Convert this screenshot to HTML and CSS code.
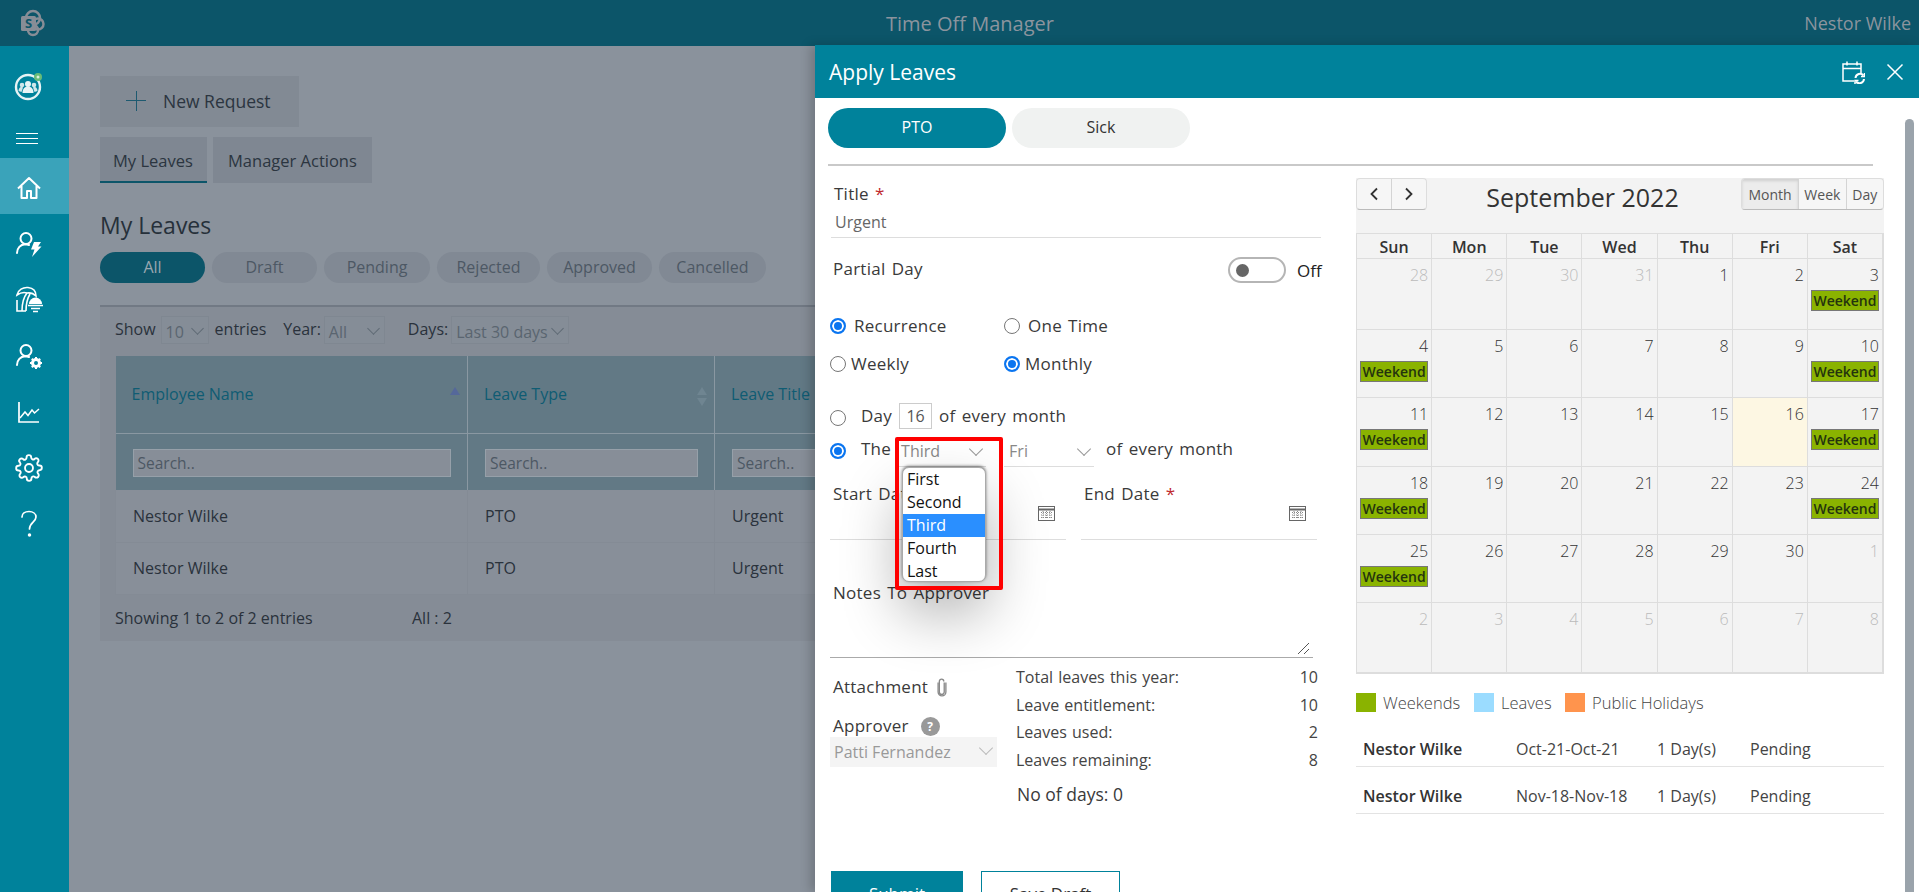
FILE: index.html
```html
<!DOCTYPE html>
<html lang="en">
<head>
    <meta charset="UTF-8">
    <meta name="viewport" content="width=device-width, initial-scale=1.0">
    <title>Time Off Manager</title>
    <link rel="stylesheet" href="styles.css">
</head>
<body>
    <header class="topbar">
        <svg class="sp-logo" width="28" height="28" viewBox="0 0 28 28">
            <circle cx="15" cy="9" r="7" fill="none" stroke="#878d96" stroke-width="2.5"/>
            <circle cx="20" cy="15" r="5.5" fill="none" stroke="#878d96" stroke-width="2.5"/>
            <circle cx="15" cy="21" r="5" fill="none" stroke="#878d96" stroke-width="2.5"/>
            <rect x="3" y="7" width="15" height="15" rx="1.5" fill="#878d96"/>
            <text x="10.5" y="19" text-anchor="middle" class="sp-letter">S</text>
        </svg>
        <div class="app-title">Time Off Manager</div>
        <div class="user-name">Nestor Wilke</div>
    </header>

    <div class="shell">
        <nav class="sidebar">
            <div class="nav-avatar">
                <svg width="32" height="32" viewBox="0 0 32 32">
                    <circle cx="15" cy="17" r="12" fill="none" stroke="#fff" stroke-width="2.4" opacity=".9"/>
                    <circle cx="15" cy="14" r="3" fill="#e8f4f6"/>
                    <path d="M9.5 23c0-4 2-6.500 5.500-6.500s5.500 2.500 5.500 6.500z" fill="#e8f4f6"/>
                    <circle cx="9" cy="15" r="2.300" fill="#cfe6ea"/>
                    <circle cx="21" cy="15" r="2.300" fill="#cfe6ea"/>
                    <path d="M5.500 21c0-2.500 1.500-4.300 3.500-4.300l1 .8-1.500 4.500zM24.500 21c0-2.500-1.500-4.300-3.500-4.300l-1 .8 1.500 4.500z" fill="#cfe6ea"/>
                    <circle cx="25" cy="7" r="4" fill="#68bb78"/>
                    <circle cx="25" cy="7" r="1.500" fill="#d9efd9"/>
                </svg>
            </div>
            <div class="nav-burger"><span></span><span></span><span></span></div>
            <a class="nav-item active">
                <svg width="26" height="26" viewBox="0 0 26 26" fill="none" stroke="#fff" stroke-width="2" stroke-linejoin="round">
                    <path d="M2 13.500 13 3l11 10.500M5.500 11v12h5.500v-7h4v7h5.500V11"/>
                </svg>
            </a>
            <a class="nav-item">
                <svg width="28" height="28" viewBox="0 0 28 28" fill="none" stroke="#fff" stroke-width="2">
                    <circle cx="11" cy="8.500" r="5.500"/>
                    <path d="M2 23c0-5 3.500-8.500 8-8.800 1.500 0 3 .3 4 .8" stroke-linecap="round"/>
                    <path d="M19 12h7l-3 4.500h3.500L17 27l2.500-7.500H16z" fill="#fff" stroke="none"/>
                </svg>
            </a>
            <a class="nav-item">
                <svg width="28" height="28" viewBox="0 0 28 28" fill="none" stroke="#fff" stroke-width="1.600">
                    <path d="M2 9C3 4 8 1 13 1.500 18 2 21 5 21 10 18 7 15 6.500 12 7 9 6 5 7 2 9z"/>
                    <path d="M12 7C8 12 7 18 7 25M15 8C12 13 11 19 11 25M2 14v11h9"/>
                    <path d="M14 18a6.500 6.500 0 0 1 13 0z" fill="#fff" stroke="none"/>
                    <path d="M13 19.500h15M16 22.500h9M18 25.500h5"/>
                </svg>
            </a>
            <a class="nav-item">
                <svg width="28" height="28" viewBox="0 0 28 28" fill="none" stroke="#fff" stroke-width="2">
                    <circle cx="11" cy="8.500" r="5.500"/>
                    <path d="M2 23c0-5 3.500-8.500 8-8.800 1.500 0 3 .3 4 .8" stroke-linecap="round"/>
                    <circle cx="21" cy="21" r="3.500" stroke-width="3"/>
                    <path d="M21 15v2.500M21 24.500V27M15 21h2.500M24.500 21H27M16.800 16.800l1.800 1.800M23.400 23.400l1.800 1.800M25.200 16.800l-1.800 1.800M18.600 23.400l-1.800 1.800" stroke-width="2"/>
                </svg>
            </a>
            <a class="nav-item">
                <svg width="24" height="24" viewBox="0 0 24 24" fill="none" stroke="#fff" stroke-width="1.700">
                    <path d="M2 2v20h20"/>
                    <path d="M3 18l5-6 3 3.500L15 10l2.500 3L22 9" stroke-width="1.500"/>
                </svg>
            </a>
            <a class="nav-item">
                <svg width="28" height="28" viewBox="0 0 24 24" fill="none" stroke="#fff" stroke-width="1.600" stroke-linejoin="round">
                    <circle cx="12" cy="12" r="3.400"/>
                    <path d="M19.400 15a1.650 1.650 0 0 0 .33 1.820l.06.06a2 2 0 1 1-2.830 2.830l-.06-.06a1.650 1.650 0 0 0-2.800 1.170V21a2 2 0 1 1-4 0v-.09a1.650 1.650 0 0 0-2.800-1.170l-.06.06a2 2 0 1 1-2.830-2.830l.06-.06a1.650 1.650 0 0 0-1.170-2.800H3a2 2 0 1 1 0-4h.09a1.650 1.650 0 0 0 1.170-2.800l-.06-.06a2 2 0 1 1 2.830-2.830l.06.06a1.650 1.650 0 0 0 2.800-1.170V3a2 2 0 1 1 4 0v.09a1.650 1.650 0 0 0 2.800 1.170l.06-.06a2 2 0 1 1 2.830 2.830l-.06.06a1.650 1.650 0 0 0 1.170 2.800H21a2 2 0 1 1 0 4h-.09a1.650 1.650 0 0 0-1.510 1z"/>
                </svg>
            </a>
            <a class="nav-item">
                <svg width="18" height="28" viewBox="0 0 18 28" fill="none" stroke="#fff" stroke-width="1.700">
                    <path d="M2 7c0-3.500 3-5.500 7-5.500s7 2.300 7 5.500c0 5-6.500 5.500-6.500 12" stroke-linecap="round"/>
                    <circle cx="9.500" cy="25" r=".9" fill="#fff"/>
                </svg>
            </a>
        </nav>

        <main class="page">
            <button class="new-request"><span class="plus"></span>New Request</button>
            <div class="tabs">
                <div class="tab selected">My Leaves</div>
                <div class="tab">Manager Actions</div>
            </div>
            <h1 class="page-title">My Leaves</h1>
            <div class="status-pills">
                <span class="status on">All</span>
                <span class="status">Draft</span>
                <span class="status w-pen">Pending</span>
                <span class="status w-rej">Rejected</span>
                <span class="status w-app">Approved</span>
                <span class="status w-can">Cancelled</span>
            </div>
            <section class="card">
                <div class="filters">
                    <span>Show</span><span class="dim-sel w-10">10</span><span>entries</span>
                    <span class="gap-l">Year:</span><span class="dim-sel w-all">All</span>
                    <span class="gap-l">Days:</span><span class="dim-sel w-days">Last 30 days</span>
                </div>
                <table class="leaves">
                    <thead>
                        <tr class="head-row">
                            <th class="c1">Employee Name<i class="sort-up"></i></th>
                            <th class="c2">Leave Type<i class="sort-both"></i></th>
                            <th>Leave Title</th>
                        </tr>
                        <tr class="search-row">
                            <th><div class="search">Search..</div></th>
                            <th><div class="search">Search..</div></th>
                            <th><div class="search">Search..</div></th>
                        </tr>
                    </thead>
                    <tbody>
                        <tr><td>Nestor Wilke</td><td>PTO</td><td>Urgent</td></tr>
                        <tr><td>Nestor Wilke</td><td>PTO</td><td>Urgent</td></tr>
                    </tbody>
                </table>
                <div class="table-foot"><span>Showing 1 to 2 of 2 entries</span><span>All : 2</span></div>
            </section>
        </main>
    </div>

    <aside class="panel">
        <div class="panel-head">
            <span class="panel-title">Apply Leaves</span>
            <svg class="cal-sync" width="24" height="24" viewBox="0 0 24 24" fill="none" stroke="#fff" stroke-width="1.500">
                <path d="M13 21H2V4h18v9M2 8.500h18M6 1.500v4M16 1.500v4"/>
                <path d="M14.500 18a4.500 4.500 0 0 1 8-2.500M23 19a4.500 4.500 0 0 1-8 2.500" stroke-width="2"/>
                <path d="M23.500 13v3.500H20M14 24v-3.500h3.500" stroke-width="1.500"/>
            </svg>
            <svg class="close-x" width="18" height="18" viewBox="0 0 18 18" stroke="#fff" stroke-width="1.500"><path d="M1.500 1.500l15 15M16.500 1.500l-15 15"/></svg>
        </div>
        <div class="panel-body">
            <div class="type-pills">
                <span class="type on">PTO</span>
                <span class="type">Sick</span>
            </div>
            <div class="rule"></div>
            <div class="columns">
                <form class="form">
                    <label class="lbl title-lbl">Title <b class="req">*</b></label>
                    <div class="text-field">Urgent</div>

                    <div class="partial">
                        <span class="lbl">Partial Day</span>
                        <span class="toggle"><i></i></span>
                        <span class="toggle-txt">Off</span>
                    </div>

                    <div class="radio-row first">
                        <span class="col-a"><i class="radio on"></i><span class="lbl">Recurrence</span></span>
                        <span class="col-b"><i class="radio"></i><span class="lbl">One Time</span></span>
                    </div>
                    <div class="radio-row second">
                        <span class="col-a tight"><i class="radio"></i><span class="lbl">Weekly</span></span>
                        <span class="col-b tight"><i class="radio on"></i><span class="lbl">Monthly</span></span>
                    </div>

                    <div class="day-row">
                        <i class="radio low"></i>
                        <span class="lbl">Day</span>
                        <span class="day-input">16</span>
                        <span class="lbl">of every month</span>
                    </div>
                    <div class="the-row">
                        <i class="radio low on"></i>
                        <span class="lbl">The</span>
                        <span class="line-sel w-third">Third</span>
                        <span class="line-sel w-fri">Fri</span>
                        <span class="lbl">of every month</span>
                        <div class="dropdown">
                            <div>First</div>
                            <div>Second</div>
                            <div class="picked">Third</div>
                            <div>Fourth</div>
                            <div>Last</div>
                        </div>
                        <div class="red-box"></div>
                    </div>

                    <div class="dates">
                        <div class="date-field">
                            <label class="lbl">Start Date <b class="req">*</b></label>
                            <div class="date-input">
                                <svg width="18" height="16" viewBox="0 0 18 16" fill="none" stroke="#666"><rect x=".5" y="1.500" width="16" height="14"/><path d="M.5 4.500h16" stroke-width="2"/><path d="M3 7.500h11M3 10h11M3 12.500h11M5 6v8M8.500 6v8M12 6v8" stroke-dasharray="1 1" stroke="#888"/></svg>
                            </div>
                        </div>
                        <div class="date-field">
                            <label class="lbl">End Date <b class="req">*</b></label>
                            <div class="date-input">
                                <svg width="18" height="16" viewBox="0 0 18 16" fill="none" stroke="#666"><rect x=".5" y="1.500" width="16" height="14"/><path d="M.5 4.500h16" stroke-width="2"/><path d="M3 7.500h11M3 10h11M3 12.500h11M5 6v8M8.500 6v8M12 6v8" stroke-dasharray="1 1" stroke="#888"/></svg>
                            </div>
                        </div>
                    </div>

                    <label class="lbl notes-lbl">Notes To Approver</label>
                    <div class="notes">
                        <svg width="13" height="13" viewBox="0 0 13 13" stroke="#555"><path d="M1 12 12 1M7 12l5-5"/></svg>
                    </div>

                    <div class="bottom">
                        <div class="bottom-left">
                            <div class="attach">
                                <span class="lbl">Attachment</span>
                                <svg width="10" height="19" viewBox="0 0 9 17" fill="none" stroke="#888" stroke-width="1.200"><path d="M6.500 4v8.500a2.200 2.200 0 0 1-4.400 0V3a2 2 0 0 1 4 0"/><path d="M8 4v8.500a3.500 3.500 0 0 1-7 0V4"/></svg>
                            </div>
                            <div class="approver">
                                <span class="lbl">Approver</span>
                                <span class="help">?</span>
                            </div>
                            <div class="approver-sel">Patti Fernandez</div>
                        </div>
                        <div class="bottom-right">
                            <div class="stat"><span>Total leaves this year:</span><span>10</span></div>
                            <div class="stat"><span>Leave entitlement:</span><span>10</span></div>
                            <div class="stat"><span>Leaves used:</span><span>2</span></div>
                            <div class="stat"><span>Leaves remaining:</span><span>8</span></div>
                            <div class="no-days">No of days: 0</div>
                        </div>
                    </div>

                    <div class="actions">
                        <button type="button" class="submit">Submit</button>
                        <button type="button" class="draft">Save Draft</button>
                    </div>
                </form>

                <div class="side">
                    <div class="cal-toolbar">
                        <div class="btn-group arrows">
                            <span class="cal-btn"><svg width="10" height="14" viewBox="0 0 10 14" fill="none" stroke="#333" stroke-width="1.800"><path d="M8 1.500 2.500 7 8 12.500"/></svg></span>
                            <span class="cal-btn"><svg width="10" height="14" viewBox="0 0 10 14" fill="none" stroke="#333" stroke-width="1.800"><path d="M2 1.500 7.500 7 2 12.500"/></svg></span>
                        </div>
                        <div class="cal-title">September 2022</div>
                        <div class="btn-group views">
                            <span class="cal-btn v-month pressed">Month</span>
                            <span class="cal-btn v-week">Week</span>
                            <span class="cal-btn v-day">Day</span>
                        </div>
                    </div>
                    <div class="cal-grid">
                        <div class="dow">Sun</div><div class="dow">Mon</div><div class="dow">Tue</div><div class="dow">Wed</div><div class="dow">Thu</div><div class="dow">Fri</div><div class="dow">Sat</div>

                        <div class="day other">28</div><div class="day other">29</div><div class="day other">30</div><div class="day other">31</div><div class="day">1</div><div class="day">2</div><div class="day">3<span class="wk">Weekend</span></div>
                        <div class="day">4<span class="wk">Weekend</span></div><div class="day">5</div><div class="day">6</div><div class="day">7</div><div class="day">8</div><div class="day">9</div><div class="day">10<span class="wk">Weekend</span></div>
                        <div class="day">11<span class="wk">Weekend</span></div><div class="day">12</div><div class="day">13</div><div class="day">14</div><div class="day">15</div><div class="day today">16</div><div class="day">17<span class="wk">Weekend</span></div>
                        <div class="day">18<span class="wk">Weekend</span></div><div class="day">19</div><div class="day">20</div><div class="day">21</div><div class="day">22</div><div class="day">23</div><div class="day">24<span class="wk">Weekend</span></div>
                        <div class="day">25<span class="wk">Weekend</span></div><div class="day">26</div><div class="day">27</div><div class="day">28</div><div class="day">29</div><div class="day">30</div><div class="day other">1</div>
                        <div class="day other">2</div><div class="day other">3</div><div class="day other">4</div><div class="day other">5</div><div class="day other">6</div><div class="day other">7</div><div class="day other">8</div>
                    </div>
                    <div class="legend">
                        <i class="sw green"></i><span class="leg-a">Weekends</span>
                        <i class="sw blue"></i><span class="leg-b">Leaves</span>
                        <i class="sw orange"></i><span>Public Holidays</span>
                    </div>
                    <div class="req-row first-req"><b>Nestor Wilke</b><span class="r-date">Oct-21-Oct-21</span><span class="r-days">1 Day(s)</span><span>Pending</span></div>
                    <div class="req-row"><b>Nestor Wilke</b><span class="r-date">Nov-18-Nov-18</span><span class="r-days">1 Day(s)</span><span>Pending</span></div>
                </div>
            </div>
        </div>
        <div class="scroll-thumb"></div>
    </aside>
</body>
</html>
```

FILE: styles.css
```css
* {
    box-sizing: border-box;
}
html, body {
    height: 100%;
}
body {
    margin: 0;
    font-family: "Open Sans", "Noto Sans", sans-serif;
    font-size: 15px;
    color: #333;
    overflow: hidden;
    background: #8a929c;
}
button {
    font-family: inherit;
}

/* top bar */
.topbar {
    height: 46px;
    background: #0c5569;
    position: relative;
    display: flex;
    align-items: center;
    padding: 0 8px 0 18px;
}
.sp-letter {
    font-family: "Open Sans", sans-serif;
    font-size: 13px;
    font-weight: 700;
    fill: #0c5569;
}
.app-title {
    margin-left: 840px;
    font-size: 20px;
    color: #8b949e;
}
.user-name {
    margin-left: auto;
    font-size: 18px;
    color: #8b949e;
}

/* left nav */
.shell {
    display: flex;
    height: calc(100% - 46px);
}
.sidebar {
    width: 69px;
    flex: none;
    background: #00829b;
    display: flex;
    flex-direction: column;
}
.nav-avatar {
    height: 70px;
    display: flex;
    align-items: center;
    padding: 10px 0 0 13px;
}
.nav-burger {
    height: 42px;
    padding: 17px 0 0 16px;
}
.nav-burger span {
    display: block;
    width: 22px;
    height: 1px;
    background: #fff;
    margin-bottom: 4px;
}
.nav-item {
    height: 56px;
    display: flex;
    align-items: center;
    justify-content: center;
    padding: 3px 12px 0 0;
}
.nav-item.active {
    background: #3aa3ba;
}

/* page behind the panel */
.page {
    flex: 1;
    min-width: 0;
    padding: 30px 0 0 31px;
    overflow: hidden;
}
.new-request {
    width: 199px;
    height: 51px;
    border: none;
    background: #828a94;
    color: #2b3540;
    font-size: 17.500px;
    font-weight: 500;
    display: flex;
    align-items: center;
    padding: 0 0 2px 26px;
}
.plus {
    width: 20px;
    height: 20px;
    margin-right: 17px;
    background:
        linear-gradient(#1e5a70, #1e5a70) center / 100% 1px no-repeat,
        linear-gradient(#1e5a70, #1e5a70) center / 1px 100% no-repeat;
}
.tabs {
    display: flex;
    gap: 6px;
    margin-top: 10px;
}
.tab {
    height: 46px;
    line-height: 48px;
    padding: 0 15px;
    background: #7f8792;
    color: #2b3540;
    font-size: 16.500px;
    font-weight: 500;
}
.tab.selected {
    width: 107px;
    padding: 0 13px;
    border-bottom: 2px solid #0c5569;
}
.page-title {
    margin: 26px 0 0;
    height: 33px;
    line-height: 33px;
    font-size: 23px;
    font-weight: 500;
    color: #26303a;
}
.status-pills {
    display: flex;
    gap: 7px;
    margin-top: 10px;
}
.status {
    width: 105px;
    height: 31px;
    line-height: 30px;
    border-radius: 16px;
    background: #818994;
    color: #4d5864;
    text-align: center;
    font-size: 16px;
}
.status.on {
    background: #0c5569;
    color: #9aa7b0;
}
.status.w-pen { width: 106px; }
.status.w-rej { width: 103px; }
.status.w-app { width: 105px; }
.status.w-can { width: 107px; }
.card {
    margin-top: 22px;
    height: 336px;
    width: 800px;
    background: #858c96;
    border-top: 2px solid #717984;
    padding: 0 0 0 15px;
    color: #2a323c;
    font-size: 16px;
}
.filters {
    height: 49px;
    display: flex;
    align-items: center;
    padding-bottom: 5px;
}
.gap-l {
    margin-left: 17px;
    margin-right: 3px;
}
.dim-sel {
    position: relative;
    height: 28px;
    line-height: 30px;
    color: #5a6570;
    padding-left: 4px;
    font-size: 16px;
    background: #858d97;
    border: 1px solid #7f8791;
    margin: 2px 6px 0 5px;
}
.dim-sel::after {
    content: "";
    position: absolute;
    right: 6px;
    top: 7px;
    width: 8px;
    height: 8px;
    border-right: 1px solid #5f6a75;
    border-bottom: 1px solid #5f6a75;
    transform: rotate(45deg);
}
.w-10 { width: 48px; }
.w-all { width: 61px; margin-left: 0; }
.w-days { width: 118px; margin-left: 0; }
.leaves {
    border-collapse: collapse;
    table-layout: fixed;
    width: 900px;
}
.leaves th {
    font-weight: 400;
    text-align: left;
    background: #627985;
    border-left: 1px solid #8a98a2;
    position: relative;
}
.leaves th:first-child {
    border-left: none;
}
.head-row th {
    height: 77px;
    padding-left: 16px;
    color: #0f5c73;
    font-size: 16px;
    border-bottom: 1px solid #8a98a2;
}
.c1 { width: 352px; }
.c2 { width: 247px; }
.search-row th {
    height: 57px;
    padding: 0 16px 0 17px;
}
.search {
    height: 28px;
    background: #878e98;
    border: 1px solid #96a0a9;
    color: #4d5864;
    font-size: 15.500px;
    line-height: 27px;
    padding-left: 4px;
    margin-top: 2px;
}
.sort-up, .sort-both {
    position: absolute;
    right: 7px;
    top: 31px;
    border-left: 5px solid transparent;
    border-right: 5px solid transparent;
    border-bottom: 8px solid #55689a;
}
.sort-both {
    border-bottom-color: #6f8591;
}
.sort-both::after {
    content: "";
    position: absolute;
    left: -5px;
    top: 11px;
    border-left: 5px solid transparent;
    border-right: 5px solid transparent;
    border-top: 8px solid #6f8591;
}
.leaves td {
    height: 52px;
    background: #888f99;
    padding-left: 17px;
    border-left: 1px solid #848b95;
    border-bottom: 1px solid #848b95;
}
.table-foot {
    display: flex;
    height: 47px;
    align-items: center;
}
.table-foot span:first-child {
    width: 297px;
}

/* slide-in panel */
.panel {
    position: absolute;
    top: 45px;
    right: 0;
    bottom: 0;
    width: 1104px;
    background: #fff;
    box-shadow: -5px 0 10px rgba(0, 0, 0, .18);
    overflow: hidden;
}
.panel-head {
    height: 53px;
    background: #00829b;
    display: flex;
    align-items: center;
    padding: 0 15px 0 14px;
}
.panel-title {
    color: #fff;
    font-size: 21px;
    flex: 1;
}
.cal-sync {
    margin-right: 21px;
}
.panel-body {
    padding: 10px 0 0 13px;
}
.type-pills {
    display: flex;
    gap: 6px;
}
.type {
    width: 178px;
    height: 40px;
    line-height: 39px;
    text-align: center;
    border-radius: 20px;
    background: #f0f2f1;
    font-size: 16px;
}
.type.on {
    background: #00829b;
    color: #fff;
}
.rule {
    height: 2px;
    width: 1045px;
    margin-top: 16px;
    background: #c9c9c9;
}
.columns {
    display: grid;
    grid-template-columns: 498px 528px;
    column-gap: 30px;
    align-items: start;
}

/* form column */
.form {
    padding-left: 2px;
    position: relative;
}
.lbl {
    font-size: 17px;
    letter-spacing: .25px;
    word-spacing: 1.500px;
    font-weight: 500;
    color: #3a3a3a;
    line-height: 22px;
}
.req {
    color: #c0282d;
    font-weight: 400;
}
.title-lbl {
    display: block;
    margin: 17px 0 0 4px;
}
.text-field {
    height: 33px;
    width: 490px;
    margin-left: 1px;
    padding: 7px 0 0 4px;
    line-height: 20px;
    color: #666;
    font-size: 16px;
    border-bottom: 1px solid #ddd;
}
.partial {
    display: flex;
    align-items: center;
    height: 26px;
    margin-top: 19px;
    padding-left: 3px;
}
.partial .lbl {
    flex: 1;
    margin-bottom: 2px;
}
.toggle {
    width: 58px;
    height: 26px;
    border: 2px solid #b5b5b5;
    border-radius: 13px;
    padding: 5px 0 0 6px;
    margin-right: 11px;
}
.toggle i {
    display: block;
    width: 13px;
    height: 13px;
    border-radius: 50%;
    background: #666;
}
.toggle-txt {
    width: 29px;
    font-size: 17px;
    color: #222;
}
.radio-row {
    display: flex;
    height: 24px;
    align-items: center;
}
.radio-row.first { margin-top: 31px; }
.radio-row.second { margin-top: 14px; }
.col-a, .col-b {
    display: flex;
    align-items: center;
    gap: 8px;
}
.col-a { width: 174px; }
.col-a.tight, .col-b.tight { gap: 5px; }
.radio {
    width: 16px;
    height: 16px;
    flex: none;
    border-radius: 50%;
    border: 1px solid #767676;
    background: #fff;
}
.radio.on {
    border: 2px solid #0a75f0;
    box-shadow: inset 0 0 0 2px #fff;
    background: #0a75f0;
}
.radio.low {
    margin-top: 3px;
}
.day-row {
    display: flex;
    align-items: center;
    height: 26px;
    margin-top: 27px;
}
.day-row .lbl:first-of-type,
.the-row .lbl:first-of-type {
    margin-left: 15px;
}
.day-input {
    width: 33px;
    height: 26px;
    line-height: 24px;
    margin: 0 7px 0 7px;
    border: 1px solid #ccc;
    text-align: center;
    font-size: 16px;
    color: #555;
}
.the-row {
    display: flex;
    height: 30px;
    margin-top: 8px;
    position: relative;
    align-items: flex-start;
}
.the-row .lbl {
    line-height: 24px;
}
.the-row .radio {
    margin-top: 6px;
}
.line-sel {
    position: relative;
    height: 30px;
    line-height: 28px;
    border-bottom: 1px solid #ddd;
    color: #888;
    font-size: 16px;
    padding-left: 5px;
}
.line-sel::after {
    content: "";
    position: absolute;
    right: 5px;
    top: 7px;
    width: 9px;
    height: 9px;
    border-right: 1px solid #999;
    border-bottom: 1px solid #999;
    transform: rotate(45deg);
}
.w-third {
    width: 90px;
    margin-left: 5px;
}
.w-fri {
    width: 90px;
    margin: 0 12px 0 18px;
}
.dropdown {
    position: absolute;
    left: 72px;
    top: 30px;
    width: 84px;
    height: 115px;
    z-index: 2;
    background: #fff;
    border: 1px solid #aaa;
    border-radius: 7px;
    box-shadow: 0 -1px 3px rgba(0, 0, 0, .5), 0 30px 60px rgba(0, 0, 0, .32);
    font-size: 16px;
    line-height: 23px;
    color: #111;
    overflow: hidden;
}
.dropdown div {
    height: 23px;
    padding-left: 4px;
}
.dropdown .picked {
    background: #2a8fff;
    color: #fff;
}
.red-box {
    position: absolute;
    left: 65px;
    top: 0;
    width: 108px;
    height: 153px;
    z-index: 3;
    border: 4px solid #f00;
    border-radius: 2px;
    pointer-events: none;
}
.dates {
    display: flex;
    gap: 15px;
    margin-top: 16px;
}
.date-field {
    width: 236px;
}
.date-field .lbl {
    display: block;
    padding-left: 3px;
}
.date-input {
    height: 35px;
    border-bottom: 1px solid #ddd;
    display: flex;
    justify-content: flex-end;
    padding: 0 10px 0 0;
}
.notes-lbl {
    display: block;
    margin: 42px 0 0 3px;
}
.notes {
    width: 483px;
    height: 54px;
    border-bottom: 1px solid #aaa;
    display: flex;
    align-items: flex-end;
    justify-content: flex-end;
    padding: 0 3px 2px 0;
}
.bottom {
    display: flex;
    gap: 19px;
    height: 213px;
}
.bottom-left {
    width: 167px;
}
.attach {
    display: flex;
    align-items: center;
    gap: 9px;
    margin-top: 18px;
    padding-left: 3px;
}
.approver {
    display: flex;
    align-items: center;
    gap: 12px;
    margin-top: 17px;
    padding-left: 3px;
}
.help {
    width: 19px;
    height: 19px;
    line-height: 19px;
    border-radius: 50%;
    background: #999;
    color: #fff;
    font-size: 12px;
    font-weight: 700;
    text-align: center;
}
.approver-sel {
    position: relative;
    height: 30px;
    line-height: 30px;
    padding-left: 4px;
    background: #f4f4f4;
    color: #999;
    font-size: 16px;
}
.approver-sel::after {
    content: "";
    position: absolute;
    right: 6px;
    top: 6px;
    width: 9px;
    height: 9px;
    border-right: 1px solid #bbb;
    border-bottom: 1px solid #bbb;
    transform: rotate(45deg);
}
.bottom-right {
    width: 302px;
    padding-top: 6px;
}
.stat {
    display: flex;
    justify-content: space-between;
    height: 27.500px;
    line-height: 27px;
    font-size: 16px;
    word-spacing: 1px;
    font-weight: 500;
    color: #444;
}
.stat span:last-child {
    font-weight: 400;
}
.no-days {
    margin-top: 8px;
    padding-left: 1px;
    font-size: 17.500px;
    font-weight: 500;
    color: #3a3a3a;
}
.actions {
    display: flex;
    gap: 18px;
    padding-left: 1px;
}
.actions button {
    height: 44px;
    font-size: 17px;
    display: block;
}
.submit {
    width: 132px;
    border: none;
    background: #00829b;
    color: #fff;
}
.draft {
    width: 139px;
    border: 1px solid #00829b;
    background: #fff;
    color: #333;
}

/* calendar column */
.side {
    padding-top: 12px;
}
.cal-toolbar {
    height: 55px;
    background: #f3f3f3;
    display: flex;
    align-items: flex-start;
}
.btn-group {
    display: flex;
    height: 32px;
    border: 1px solid #ddd;
    border-bottom-color: #bbb;
    border-radius: 4px;
    background: #f6f6f6;
    overflow: hidden;
}
.arrows {
    width: 71px;
}
.cal-btn {
    display: flex;
    align-items: center;
    justify-content: center;
    font-size: 14px;
    color: #555;
    border-left: 1px solid #d4d4d4;
}
.arrows .cal-btn {
    flex: 1;
}
.cal-btn:first-child {
    border-left: none;
}
.pressed {
    background: #ececec;
    box-shadow: inset 0 2px 3px rgba(0, 0, 0, .12);
}
.v-month { width: 57px; }
.v-week { width: 48px; }
.v-day { width: 38px; }
.views {
    width: 143px;
}
.cal-title {
    flex: 1;
    text-align: center;
    font-size: 25px;
    line-height: 38px;
    color: #333;
    padding-right: 3px;
}
.cal-grid {
    display: grid;
    grid-template-columns: repeat(7, 1fr);
    grid-template-rows: 25px 71px 68px 69px 68px 68px 70px;
    background: #f3f3f3;
    border: 1px solid #ddd;
    width: 528px;
}
.dow {
    border: 1px solid #ddd;
    border-width: 0 1px 1px 0;
    text-align: center;
    font-weight: 600;
    font-size: 16px;
    line-height: 27px;
}
.day {
    border: 1px solid #ddd;
    border-width: 0 1px 1px 0;
    text-align: right;
    font-size: 16px;
    font-weight: 300;
    line-height: 22px;
    padding: 5px 3px 0 0;
    color: #333;
}
.day.other {
    color: #bbb;
}
.day.today {
    background: #fdf7e3;
}
.wk {
    display: block;
    height: 21px;
    margin: 4px 0 0 3px;
    background: #8ab300;
    border: 1px solid #777;
    text-align: center;
    font-size: 14px;
    font-weight: 600;
    line-height: 19px;
    color: #24330e;
}
.legend {
    display: flex;
    align-items: center;
    height: 19px;
    margin-top: 19px;
    font-size: 16.500px;
    font-weight: 300;
    color: #444;
}
.sw {
    width: 20px;
    height: 19px;
    margin-right: 7px;
}
.green { background: #8ab300; }
.blue { background: #9bdcff; }
.orange { background: #ff944d; }
.leg-a { width: 91px; }
.leg-b { width: 64px; }
.req-row {
    display: flex;
    align-items: center;
    height: 47px;
    padding: 12px 0 0 7px;
    border-bottom: 1px solid #e3e3e3;
    font-size: 16px;
    color: #444;
}
.first-req {
    height: 55px;
    padding-top: 19px;
}
.req-row b {
    width: 153px;
    color: #333;
    font-weight: 600;
}
.r-date { width: 141px; }
.r-days { width: 93px; }
.scroll-thumb {
    position: absolute;
    left: 1090px;
    top: 74px;
    bottom: 0;
    width: 9px;
    background: #9aa3ab;
    border-radius: 5px 5px 0 0;
}
```
